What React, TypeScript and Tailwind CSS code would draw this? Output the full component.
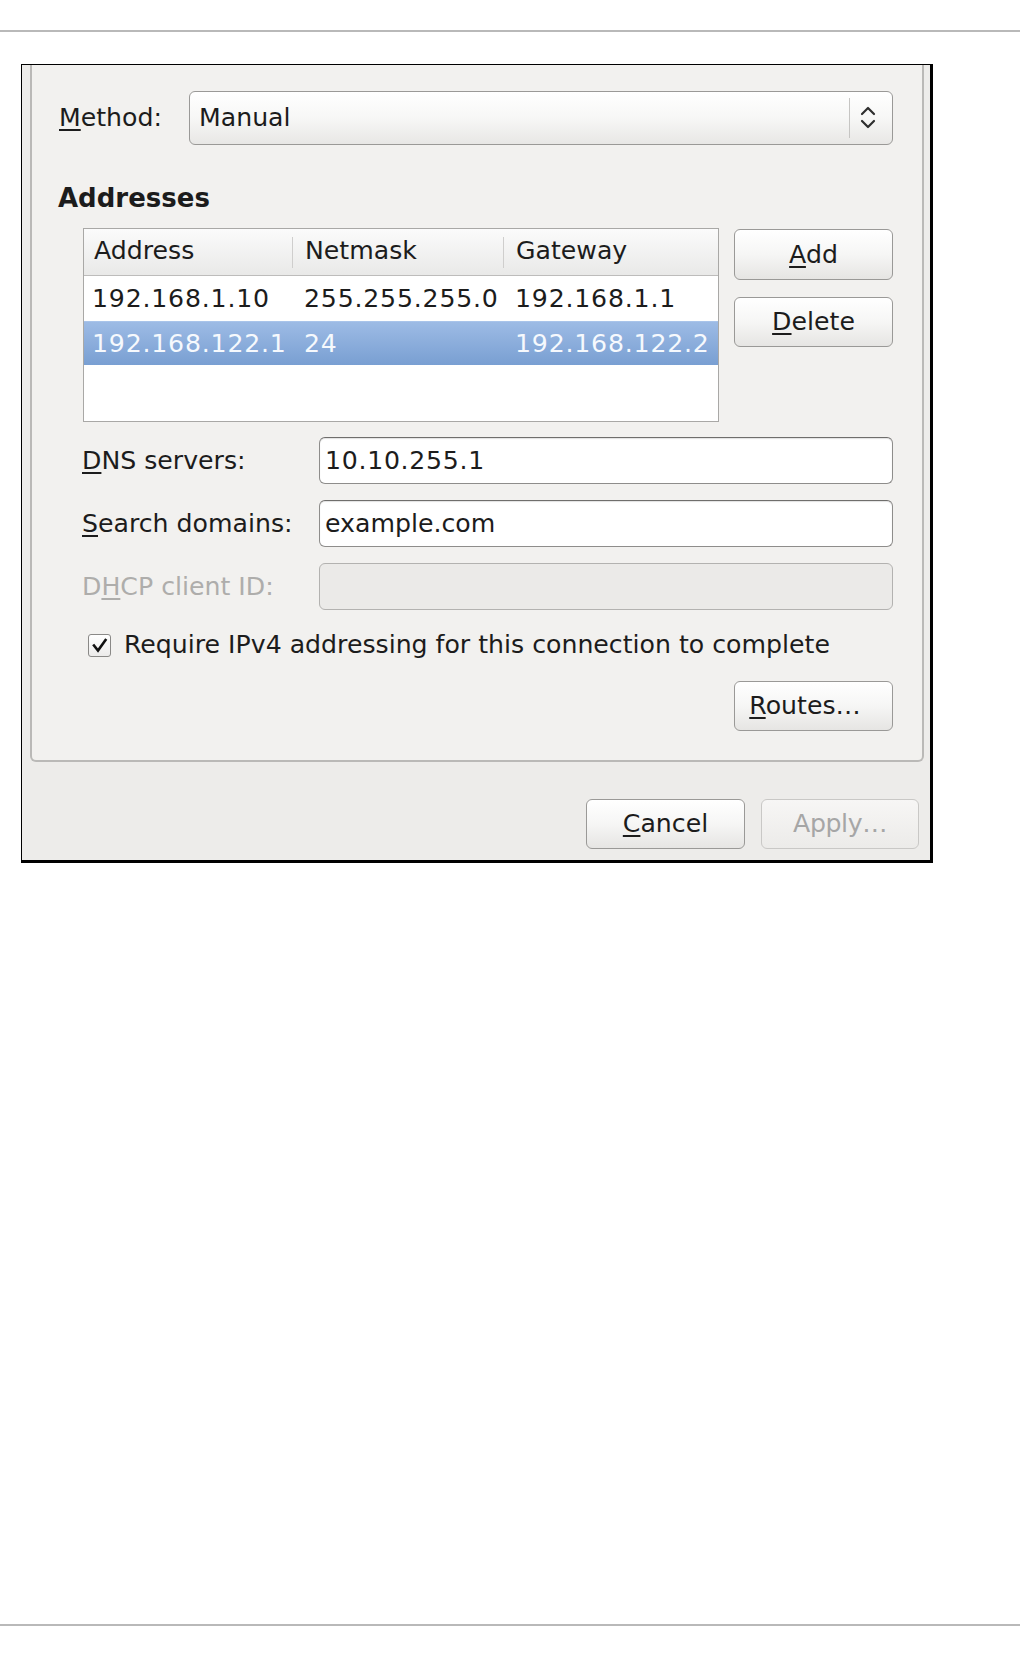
import React from "react";

function U({ children }: { children: React.ReactNode }) {
  return (
    <span className="underline decoration-[2px] underline-offset-[3px]">{children}</span>
  );
}

function Btn({
  children,
  disabled = false,
  w = "w-[159px]",
  h = "h-[50px]",
}: {
  children: React.ReactNode;
  disabled?: boolean;
  w?: string;
  h?: string;
}) {
  return (
    <div
      className={
        disabled
          ? `${w} ${h} flex items-center justify-center rounded-[6px] border border-[#c9c8c6] bg-linear-to-b from-[#f7f6f5] to-[#ecebe9] text-[#a6a6a6]`
          : `${w} ${h} flex items-center justify-center rounded-[6px] border border-[#9a9997] bg-linear-to-b from-[#ffffff] via-[#f6f6f5] to-[#e6e5e3] text-[#1c1c1c] shadow-[inset_0_1px_0_#ffffff]`
      }
    >
      {children}
    </div>
  );
}

function Entry({ children, disabled = false }: { children?: React.ReactNode; disabled?: boolean }) {
  return (
    <div
      className={
        disabled
          ? "h-[47px] flex-1 flex items-center rounded-[6px] border border-[#b3b2b0] bg-[#ebeae8] pl-[5px]"
          : "h-[47px] flex-1 flex items-center rounded-[6px] border border-[#8e8d8b] border-t-[#6f6e6c] bg-white pl-[5px] text-[#1c1c1c] shadow-[inset_0_1px_1px_rgba(0,0,0,0.12)]"
      }
    >
      {children}
    </div>
  );
}

export default function App() {
  return (
    <div className="h-[1656px] w-[1020px] bg-white flex flex-col font-['DejaVu_Sans',sans-serif] text-[25.2px] text-[#1c1c1c]">
      <div className="mt-[30px] h-[2px] w-full bg-[#b9b9b9]" />

      {/* Dialog */}
      <div className="mt-[32px] ml-[21px] w-[912px] border-l border-t border-r-[3px] border-b-[3px] border-black bg-[#edecea] flex flex-col">
        {/* Frame */}
        <div className="ml-[8px] mr-[6px] border-l-2 border-r-2 border-b-2 border-[#bab9b7] rounded-b-[6px] bg-[#f2f1ef] pl-[26px] pr-[29px] pt-[26px] pb-[29px] flex flex-col">
          {/* Method */}
          <div className="flex items-center h-[54px]">
            <div className="w-[131px] shrink-0 pl-[1px]">
              <U>M</U>ethod:
            </div>
            <div className="flex-1 h-[54px] flex items-center rounded-[6px] border border-[#9a9997] bg-linear-to-b from-[#ffffff] via-[#f7f7f6] to-[#e8e7e5]">
              <div className="flex-1 pl-[9px]">Manual</div>
              <div className="w-px h-[40px] bg-[#c6c5c3]" />
              <div className="w-[42px] h-full flex items-center pl-[10px]">
                <svg width="16" height="26" viewBox="0 0 16 26" fill="none">
                  <path d="M2 9 L8 3 L14 9" stroke="#2e2e2e" strokeWidth="2.2" strokeLinecap="round" strokeLinejoin="round" />
                  <path d="M2 16 L8 22 L14 16" stroke="#2e2e2e" strokeWidth="2.2" strokeLinecap="round" strokeLinejoin="round" />
                </svg>
              </div>
            </div>
          </div>

          {/* Addresses heading */}
          <div className="mt-[38px] leading-[30px] font-bold text-[26px]">Addresses</div>

          {/* Table + buttons */}
          <div className="mt-[15px] pl-[25px] flex gap-[15px]">
            <div className="w-[636px] h-[194px] border border-[#a9a8a6] bg-white flex flex-col">
              {/* header */}
              <div className="h-[47px] flex items-center border-b border-[#bdbcbb] bg-linear-to-b from-[#fbfbfb] to-[#e9e9e8]">
                <div className="w-[208px] h-full flex items-center pl-[10px] pb-[3px]">Address</div>
                <div className="w-px h-[31px] bg-[#cfcecd]" />
                <div className="w-[210px] h-full flex items-center pl-[12px] pb-[3px]">Netmask</div>
                <div className="w-px h-[31px] bg-[#cfcecd]" />
                <div className="flex-1 h-full flex items-center pl-[12px] pb-[3px]">Gateway</div>
              </div>
              {/* row 1 */}
              <div className="h-[45px] grid grid-cols-[209px_211px_1fr] items-center tracking-[0.8px]">
                <div className="pl-[8px]">192.168.1.10</div>
                <div className="pl-[11px]">255.255.255.0</div>
                <div className="pl-[11px]">192.168.1.1</div>
              </div>
              {/* row 2 selected */}
              <div className="h-[44px] grid grid-cols-[209px_211px_1fr] items-center tracking-[0.8px] text-[#f6f9fd] bg-linear-to-b from-[#9dbbe5] to-[#799fd2] border-t border-[#a9c4ea]">
                <div className="pl-[8px]">192.168.122.1</div>
                <div className="pl-[11px]">24</div>
                <div className="pl-[11px]">192.168.122.2</div>
              </div>
            </div>
            <div className="w-[159px] mt-[1px] flex flex-col gap-[17px]">
              <Btn h="h-[51px]">
                <span>
                  <U>A</U>dd
                </span>
              </Btn>
              <Btn>
                <span>
                  <U>D</U>elete
                </span>
              </Btn>
            </div>
          </div>

          {/* Fields */}
          <div className="mt-[15px] pl-[24px] flex flex-col gap-[16px]">
            <div className="flex items-center">
              <div className="w-[237px] shrink-0">
                <U>D</U>NS servers:
              </div>
              <Entry>
                <span className="tracking-[0.7px]">10.10.255.1</span>
              </Entry>
            </div>
            <div className="flex items-center">
              <div className="w-[237px] shrink-0">
                <U>S</U>earch domains:
              </div>
              <Entry>example.com</Entry>
            </div>
            <div className="flex items-center">
              <div className="w-[237px] shrink-0 text-[#aeadab]">
                D<U>H</U>CP client ID:
              </div>
              <Entry disabled />
            </div>
          </div>

          {/* Checkbox */}
          <div className="mt-[20px] h-[30px] pl-[30px] flex items-center gap-[13px]">
            <div className="w-[23px] h-[23px] rounded-[3px] border border-[#8a8987] bg-linear-to-b from-[#ffffff] to-[#ecebea] flex items-center justify-center">
              <svg width="17" height="17" viewBox="0 0 17 17" fill="none">
                <path d="M3 8.5 L7 13.5 L14.5 3" stroke="#111" strokeWidth="2.6" strokeLinecap="square" />
              </svg>
            </div>
            <div>Require IPv4 addressing for this connection to complete</div>
          </div>

          {/* Routes */}
          <div className="mt-[21px] flex justify-end">
            <Btn>
              <span className="pr-[17px]">
                <U>R</U>outes…
              </span>
            </Btn>
          </div>
        </div>

        {/* Bottom buttons */}
        <div className="mt-[37px] mb-[11px] pr-[11px] flex justify-end gap-[16px]">
          <Btn>
            <span>
              <U>C</U>ancel
            </span>
          </Btn>
          <Btn disabled w="w-[158px]">
            <span className="tracking-[-0.4px]">Apply…</span>
          </Btn>
        </div>
      </div>

      <div className="mt-auto mb-[30px] h-[2px] w-full bg-[#b9b9b9]" />
    </div>
  );
}
